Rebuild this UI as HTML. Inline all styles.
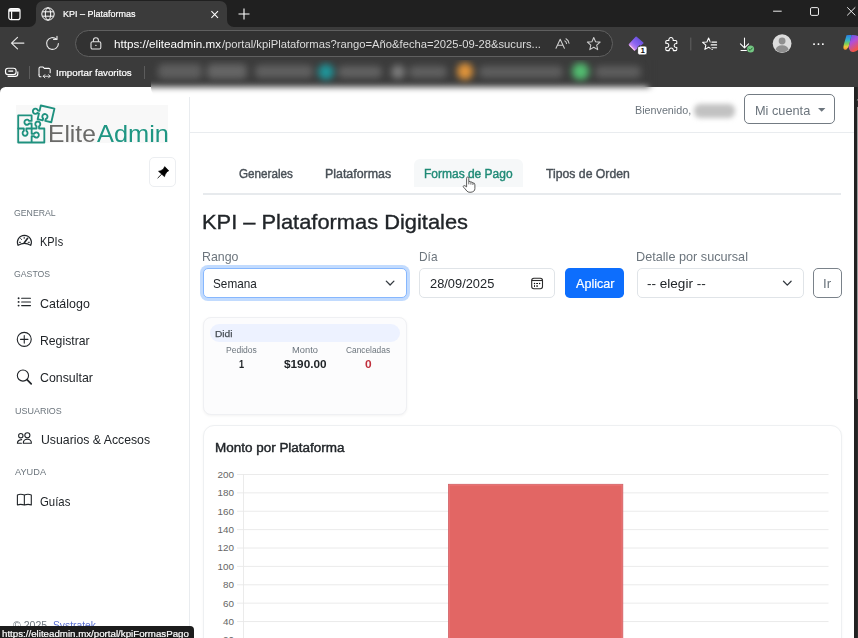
<!DOCTYPE html>
<html lang="es"><head><meta charset="utf-8"><title>KPI – Plataformas</title>
<style>
*{box-sizing:border-box;margin:0;padding:0}
html,body{width:858px;height:638px;overflow:hidden;background:#202020;font-family:"Liberation Sans",sans-serif}
#root{position:relative;width:858px;height:638px;overflow:hidden}
.a{position:absolute}
.t{position:absolute;white-space:pre;line-height:1;transform-origin:0 0;font-family:"Liberation Sans",sans-serif}
svg{position:absolute;overflow:visible}
</style></head><body><div id="root">
<!-- ===== browser chrome ===== -->
<div class="a" style="left:0;top:0;width:858px;height:28px;background:#202020"></div>
<div class="a" style="left:0;top:27.3px;width:858px;height:70px;background:#3b3b3b"></div>
<!-- active tab -->
<div class="a" style="left:36px;top:1px;width:191px;height:27px;background:#3b3b3b;border-radius:7px 7px 0 0"></div>
<svg style="left:29px;top:20px" width="7" height="7"><path d="M7 0V7H0A7 7 0 0 0 7 0Z" fill="#3b3b3b"/></svg>
<svg style="left:227px;top:20px" width="7" height="7"><path d="M0 0V7H7A7 7 0 0 1 0 0Z" fill="#3b3b3b"/></svg>
<!-- tab actions icon -->
<svg style="left:8px;top:8px" width="13" height="13" viewBox="0 0 13 13" fill="none" stroke="#fff" stroke-width="1.2"><rect x="0.8" y="0.6" width="11.2" height="11" rx="2.2"/><path d="M1 2.4H11.8" stroke-width="2.6"/><path d="M3.6 3.3V11.6"/></svg>
<!-- globe -->
<svg style="left:41px;top:7px" width="14" height="14" viewBox="0 0 14 14" fill="none" stroke="#fff" stroke-width="1"><circle cx="7" cy="7" r="6.2"/><ellipse cx="7" cy="7" rx="2.7" ry="6.2"/><path d="M1.3 4.8H12.7M1.3 9.2H12.7"/></svg>
<!-- tab close -->
<svg style="left:0;top:0" width="230" height="27" stroke="#fff" stroke-width="1.05"><path d="M211.4 11.2L218 17.8M218 11.2L211.4 17.8"/></svg>
<!-- new tab -->
<svg style="left:238px;top:8px" width="12" height="12" viewBox="0 0 12 12" stroke="#fff" stroke-width="1.1"><path d="M6 0.5V11.5M0.5 6H11.5"/></svg>
<!-- window controls -->
<svg style="left:0;top:0" width="858" height="27" fill="none" stroke="#ececec" stroke-width="1"><path d="M773.1 11.2H781.7"/><rect x="810.5" y="7.6" width="8" height="7.8" rx="1.3"/><path d="M847.2 7.3L855.3 15.4M855.3 7.3L847.2 15.4"/></svg>
<!-- back -->
<svg style="left:0;top:0" width="70" height="60" fill="none" stroke="#e6e6e6" stroke-width="1.15" stroke-linecap="round" stroke-linejoin="round"><path d="M23.9 43.1H11.7M17.5 37.3L11.5 43.1L17.5 48.9"/></svg>
<!-- refresh -->
<svg style="left:45px;top:36.1px" width="15" height="15" viewBox="0 0 15 15" fill="none" stroke="#e6e6e6" stroke-width="1.15" stroke-linecap="round" stroke-linejoin="round"><path d="M13.4 7.5A5.9 5.9 0 1 1 11.3 3"/><path d="M8.6 3.4H12V0.3"/></svg>
<!-- address pill -->
<div class="a" style="left:74.7px;top:30.2px;width:538.8px;height:26.4px;border-radius:14px;background:#323232;border:1px solid #606060"></div>
<!-- lock -->
<svg style="left:90px;top:37px" width="12" height="13" viewBox="0 0 12 13" fill="none" stroke="#e4e4e4" stroke-width="1.1"><rect x="1" y="4.8" width="9.8" height="7.2" rx="1.4"/><path d="M3.4 4.8V3.2A2.5 2.5 0 0 1 8.4 3.2V4.8"/><circle cx="5.9" cy="8.4" r="0.7" fill="#e4e4e4" stroke="none"/></svg>
<!-- toolbar right icons -->
<svg style="left:0;top:0" width="858" height="62" fill="none" stroke="#fff" stroke-width="1.05" stroke-linecap="round" stroke-linejoin="round">
<defs>
<linearGradient id="g1" x1="0" y1="1" x2="1" y2="0"><stop offset="0" stop-color="#f3a6e6"/><stop offset="0.45" stop-color="#8d66f2"/><stop offset="1" stop-color="#5a48d8"/></linearGradient>
<linearGradient id="g2" x1="0" y1="0" x2="0" y2="1"><stop offset="0" stop-color="#2b7fe6"/><stop offset="0.35" stop-color="#35b3c8"/><stop offset="0.6" stop-color="#7ccf55"/><stop offset="0.8" stop-color="#f4c63a"/><stop offset="1" stop-color="#f08a34"/></linearGradient>
<linearGradient id="g3" x1="0" y1="0" x2="0.4" y2="1"><stop offset="0" stop-color="#4a62e8"/><stop offset="0.5" stop-color="#b24fd8"/><stop offset="1" stop-color="#f0564a"/></linearGradient>
<clipPath id="cf"><path d="M700 36H712.6V40.6H710.6V49H713V52H700Z"/></clipPath>
</defs>
<g stroke="#cfcfcf"><path d="M556 48.3L560.2 39.3L564.4 48.3M557.5 45.3H562.9"/><path d="M564.8 40.9A3.2 3.2 0 0 1 566.5 43.6M566 38.8A5.8 5.8 0 0 1 569 43.2"/><path d="M593.75 37.50L595.57 41.69L600.12 42.13L596.70 45.16L597.69 49.62L593.75 47.30L589.81 49.62L590.80 45.16L587.38 42.13L591.93 41.69Z"/></g>
<path d="M636.2 37.4L642.8 43L634.6 50L629.5 44.6Z" fill="url(#g1)" stroke="url(#g1)" stroke-width="1.6"/>
<path d="M630 45.6L634.4 49.9" stroke="#f7c4ee" stroke-width="1.3"/>
<rect x="637.6" y="46" width="9.4" height="8.9" rx="2" fill="#fff" stroke="#303030" stroke-width="0.8"/>
<path d="M668.9 40.4A2.2 2.2 0 1 1 673.1 40.4H675.6Q676.8 40.4 676.8 41.6V43.6A2 2 0 1 0 676.8 47.4V49.4Q676.8 50.6 675.6 50.6H673.3A2.1 2.1 0 1 0 669.2 50.6H667Q665.8 50.6 665.8 49.4V47.2A2.1 2.1 0 1 0 665.8 43.4V41.6Q665.8 40.4 667 40.4Z"/>
<path d="M690.8 38V50" stroke="#666" stroke-width="0.9"/>
<g clip-path="url(#cf)"><path d="M708.60 38.00L710.30 41.95L714.59 42.35L711.36 45.20L712.30 49.40L708.60 47.20L704.90 49.40L705.84 45.20L702.61 42.35L706.90 41.95Z"/></g>
<path d="M711.9 42.1H716.6M711.2 44.9H716.6M711.9 47.7H716.6" stroke-width="1.1"/>
<path d="M744.5 38V47.6M740.4 43.8L744.5 47.9L748.6 43.8M741 50.5H746.4"/>
<circle cx="750.6" cy="49.1" r="3.5" fill="#74c783" stroke="none"/>
<path d="M748.9 49.2L750.1 50.4L752.3 48" stroke="#1d5c2b" stroke-width="0.95"/>
<circle cx="782.1" cy="43.6" r="9.4" fill="#dcdcdc" stroke="none"/>
<circle cx="782.1" cy="41" r="3.4" fill="#8f8f8f" stroke="none"/>
<path d="M775.6 49.8A6.6 5.6 0 0 1 788.6 49.8A9.2 9.2 0 0 1 775.6 49.8Z" fill="#8f8f8f" stroke="none"/>
<g fill="#fff" stroke="none"><rect x="813.2" y="43.2" width="1.7" height="1.7" rx="0.5"/><rect x="817.6" y="43.2" width="1.7" height="1.7" rx="0.5"/><rect x="822" y="43.2" width="1.7" height="1.7" rx="0.5"/></g>
<path d="M846.5 35.2Q848 34.8 851.5 35L849.5 44Q848.8 48 846.5 49.6Q844.2 50.4 843.4 48.2Q843.3 46.5 844 44Z" fill="url(#g2)" stroke="none"/>
<path d="M851.5 35Q855 34.6 858 36V50Q856 51.5 853.5 52Q850.5 52.3 849.6 50L848.6 47.5Z" fill="url(#g3)" stroke="none"/>
</svg>
<span class="t" style="left:640.4px;top:46.6px;font-size:8px;font-weight:700;color:#111">1</span>
<!-- bookmarks row -->
<svg style="left:0;top:0" width="60" height="90" fill="none" stroke="#fff" stroke-width="1.15"><rect x="5.5" y="68.2" width="10.6" height="6.4" rx="2.6"/><path d="M7.6 76.3H15.2A2.6 2.6 0 0 0 17.8 73.7V71.6"/><path d="M8.3 71.1H13.2" stroke-width="1.3"/></svg>
<div class="a" style="left:29px;top:66px;width:1px;height:13px;background:#5c5c5c"></div>
<svg style="left:38px;top:65.8px" width="14.3" height="12.8" viewBox="0 0 15 14" fill="none" stroke="#fff" stroke-width="1.1" stroke-linejoin="round" stroke-linecap="round"><path d="M0.8 9.5V2.4A1.4 1.4 0 0 1 2.2 1H5L6.6 2.6H11.6A1.4 1.4 0 0 1 13 4V7.5"/><path d="M0.8 9.5V10.4A1.4 1.4 0 0 0 2.2 11.8H3"/><path d="M5.5 11.2H12.8M11.2 9.4L13 11.2L11.2 13M7.2 9.4L5.4 11.2L7.2 13" stroke-width="0.9"/></svg>
<div class="a" style="left:144px;top:66px;width:1px;height:13px;background:#5c5c5c"></div>
<!-- ===== page ===== -->
<div class="a" id="page" style="left:0;top:87px;width:854.2px;height:551px;background:#fff;border-top-left-radius:5.5px;overflow:hidden"></div>
<!-- scrollbar -->
<div class="a" style="left:854.2px;top:87px;width:3.8px;height:551px;background:#222"></div>
<div class="a" style="left:856.5px;top:87px;width:1.5px;height:551px;background:#2c2c2c"></div><div class="a" style="left:856.7px;top:106.5px;width:1.3px;height:292.5px;background:#9a9a9a"></div><svg style="left:855.5px;top:95.5px" width="3" height="5"><path d="M3 0.5V4.5H0.6Z" fill="#8a8a8a"/></svg>
<div class="a" style="left:189px;top:87px;width:1px;height:551px;background:#e9ecef"></div>
<!-- blurred bookmarks -->
<div class="a" style="left:151px;top:60px;width:520px;height:37px;overflow:hidden;border-radius:0 0 0 9px">
  <div class="a" style="left:-20px;top:-20px;width:560px;height:82px;filter:blur(3.3px)">
    <div class="a" style="left:0;top:0;width:519px;height:47px;background:#3b3b3b"></div>
    <div class="a" style="left:0;top:47px;width:517px;height:40px;background:#fff;border-radius:0 0 8px 0"></div>
  </div>
  <div class="a" style="left:-20px;top:-20px;width:560px;height:82px;filter:blur(3.6px)">
    <div class="a" style="left:27px;top:24px;width:44px;height:15px;background:#5e5e5e;border-radius:5px"></div>
    <div class="a" style="left:76px;top:24px;width:40px;height:15px;background:#656565;border-radius:5px"></div>
    <div class="a" style="left:124px;top:25px;width:58px;height:13px;background:#606060;border-radius:5px"></div>
    <div class="a" style="left:187px;top:24px;width:16px;height:16px;border-radius:8px;background:#1f959a"></div>
    <div class="a" style="left:207px;top:26px;width:44px;height:12px;background:#626262;border-radius:5px"></div>
    <div class="a" style="left:260px;top:25px;width:14px;height:14px;border-radius:7px;background:#7c7c7c"></div>
    <div class="a" style="left:278px;top:26px;width:38px;height:12px;background:#606060;border-radius:5px"></div>
    <div class="a" style="left:326px;top:23px;width:16px;height:17px;border-radius:8px;background:#e0943a"></div>
    <div class="a" style="left:348px;top:26px;width:84px;height:12px;background:#5e5e5e;border-radius:5px"></div>
    <div class="a" style="left:441px;top:23px;width:17px;height:17px;border-radius:8px;background:#52bd70"></div>
    <div class="a" style="left:464px;top:26px;width:46px;height:12px;background:#5e5e5e;border-radius:5px"></div>
  </div>
</div>
<!-- sidebar -->
<div class="a" style="left:16px;top:105px;width:152px;height:38px;background:#f8f8f8"></div>
<svg style="left:0;top:0" width="200" height="200" fill="none" stroke="#1f917f" stroke-width="1.9" stroke-linejoin="round" stroke-linecap="round">
<g transform="translate(44.33,0) scale(0.965,1) translate(-44.33,0)"><path d="M31.17 128.57V123.5H28.55A2.6 2.6 0 1 1 28.55 120.9H31.17V115.41H17.26V128.57H23.1V130.85A2.6 2.6 0 1 0 25.7 130.85V128.57H31.17"/>
<path d="M17.26 128.57V142.48H44.33V128.57H38.86V126.3A2.6 2.6 0 1 0 36.26 126.3V128.57H31.17V133.7H33.8A2.6 2.6 0 1 1 33.8 136.3H31.17V142.48"/>
</g>
<g transform="translate(40.8,105.5) rotate(13)"><path d="M0 0H14V14H7.8V12.15A2.6 2.6 0 1 0 5.2 12.15V14H0V8.1H-1.65A2.6 2.6 0 1 1 -1.65 5.5H0Z"/></g>
</svg>
<div class="a" style="left:149.3px;top:157px;width:27.2px;height:29.5px;border:1px solid #eceef1;border-radius:5px;background:#fff"></div>
<svg style="left:0;top:0" width="200" height="200"><path d="M164.7 166.6L168.8 170.7L166.9 171.9L165.2 174.6L164.5 176.7L158.5 171.3L160.6 170.7L163.2 169.2Z" fill="#000" stroke="#000" stroke-width="0.6" stroke-linejoin="round"/><path d="M161.6 174.2L157.9 177.9" stroke="#222" stroke-width="1" stroke-linecap="round"/></svg>
<svg style="left:0;top:0" width="200" height="638" fill="none" stroke="#212529" stroke-width="1.1" stroke-linecap="round" stroke-linejoin="round">
<path d="M18.1 245.4A7 7 0 1 1 30.7 245.4Q24.4 241.4 18.1 245.4Z"/>
<path d="M24.3 242.8L27.6 238.3" stroke-width="1.6"/>
<path d="M24.2 237.2V238.4M20.7 238.6L21.5 239.5M19.3 242.3H20.5M28.2 242.3H29.4" stroke-width="1"/>
<g stroke-width="1.05"><path d="M21.6 298.3H30.5M21.6 301.9H30.5M21.6 305.6H30.5"/></g>
<g fill="#212529" stroke="none"><circle cx="18.6" cy="298.3" r="0.95"/><circle cx="18.6" cy="301.9" r="0.95"/><circle cx="18.6" cy="305.6" r="0.95"/></g>
<circle cx="24.25" cy="339.35" r="7"/><path d="M20.5 339.35H28M24.25 335.6V343.1"/>
<circle cx="22.95" cy="375.55" r="5.6"/><path d="M27 379.6L31.2 383.8" stroke-width="1.7"/>
<circle cx="27.35" cy="435.3" r="2.55"/><path d="M23.3 443.3H31.4Q31.4 439.3 27.35 439.3Q23.3 439.3 23.3 443.3Z"/>
<circle cx="20.8" cy="435.7" r="2.2"/><path d="M21.4 443.3H17.4Q17.4 440 21.7 439.6"/>
<path d="M17.4 494.9Q20.8 493.6 24.35 495Q27.9 493.6 31.3 494.9V504.9Q27.9 503.7 24.35 505.1Q20.8 503.7 17.4 504.9ZM24.35 495V505"/>
</svg>
<!-- header -->
<div class="a" style="left:190px;top:132px;width:664px;height:1px;background:#e9ecef"></div>
<div class="a" style="left:693.5px;top:103.5px;width:41px;height:14px;background:#c2c2c2;border-radius:6px;filter:blur(2.5px)"></div>
<div class="a" style="left:744.3px;top:94.2px;width:90.8px;height:30.2px;border:1px solid #737b83;border-radius:5px;background:#fff"></div>
<svg style="left:818px;top:107.6px" width="8" height="4"><path d="M0 0H7.4L3.7 3.7Z" fill="#6c757d"/></svg>
<!-- tabs -->
<div class="a" style="left:413.8px;top:158.5px;width:109.2px;height:28.3px;background:#f6f8f9;border-radius:6px 6px 0 0"></div>
<div class="a" style="left:202.8px;top:193.3px;width:638.7px;height:1.6px;background:#e7eaed"></div>
<!-- filters -->
<div class="a" style="left:202.8px;top:268px;width:204.6px;height:30.2px;border:1px solid #86b7fe;border-radius:5px;background:#fff;box-shadow:0 0 0 3px rgba(13,110,253,.25)"></div>
<svg style="left:0;top:0" width="858" height="300" fill="none" stroke="#343a40" stroke-width="1.3" stroke-linecap="round" stroke-linejoin="round"><path d="M386.3 281.1L390.1 285L393.9 281.1"/></svg>
<div class="a" style="left:419.2px;top:268px;width:136.3px;height:30.2px;border:1px solid #e0e4e8;border-radius:5px;background:#fff"></div>
<svg style="left:0;top:0" width="858" height="300" fill="none" stroke="#2a2a2a" stroke-width="1.1"><rect x="531.7" y="278.2" width="10.8" height="10.5" rx="2.2"/><path d="M531.7 280.5H542.5"/><g fill="#111" stroke="none"><circle cx="534.5" cy="283.5" r="0.75"/><rect x="536.2" y="283" width="1.8" height="1"/><circle cx="539.6" cy="283.5" r="0.75"/><rect x="534" y="285.2" width="1" height="1.7"/><rect x="536.2" y="285.2" width="1.8" height="1.7" fill="#555"/></g></svg>
<div class="a" style="left:565px;top:268.1px;width:59.4px;height:30.1px;border-radius:4.8px;background:#0d6efd"></div>
<div class="a" style="left:637.2px;top:268px;width:166.4px;height:30.2px;border:1px solid #e0e4e8;border-radius:5px;background:#fff"></div>
<svg style="left:0;top:0" width="858" height="300" fill="none" stroke="#343a40" stroke-width="1.3" stroke-linecap="round" stroke-linejoin="round"><path d="M783.5 281.3L787.3 285.1L791.1 281.3"/></svg>
<div class="a" style="left:813.2px;top:268.2px;width:28.8px;height:30px;border:1px solid #7a828a;border-radius:5px;background:#fff"></div>
<!-- Didi card -->
<div class="a" style="left:202.5px;top:317.3px;width:204.5px;height:98px;border:1px solid #eff0f3;border-radius:8px;background:#fcfcfd;box-shadow:0 1px 3px rgba(0,0,0,.05)"></div>
<div class="a" style="left:209.6px;top:324.2px;width:190.5px;height:17.8px;border-radius:9px;background:#edf2ff"></div>
<!-- chart card -->
<div class="a" style="left:202.5px;top:425px;width:639px;height:240px;border:1px solid #eef0f2;border-radius:11px;background:#fff;box-shadow:0 1px 3px rgba(0,0,0,.04)"></div>
<!--CHART-->
<svg style="left:0;top:0" width="858" height="638" fill="none"><g stroke="#e7e7e7" stroke-width="0.85"><path d="M237 474.50H828.5"/><path d="M237 492.88H828.5"/><path d="M237 511.26H828.5"/><path d="M237 529.64H828.5"/><path d="M237 548.02H828.5"/><path d="M237 566.40H828.5"/><path d="M237 584.78H828.5"/><path d="M237 603.16H828.5"/><path d="M237 621.54H828.5"/><path d="M237 639.92H828.5"/><path d="M243.5 474.2V640"/></g><rect x="448.4" y="484.3" width="174.4" height="160" fill="#e26664" stroke="#cf666b" stroke-width="0.8"/><rect x="449.3" y="485.2" width="172.6" height="160" fill="none" stroke="#ee7577" stroke-width="0.7"/></svg>
<span class="t" style="left:62.60px;top:9.14px;font-size:9.6px;font-weight:400;color:#ffffff;transform:scaleX(0.9365);-webkit-text-stroke:0.2px #fff;">KPI – Plataformas</span>
<span class="t" style="left:114.00px;top:39.08px;font-size:11.2px;font-weight:400;color:#ffffff;transform:scaleX(1.0437);">https://eliteadmin.mx</span>
<span class="t" style="left:221.50px;top:39.08px;font-size:11.2px;font-weight:400;color:#dcdcdc;transform:scaleX(1.0035);">/portal/kpiPlataformas?rango=Año&amp;fecha=2025-09-28&amp;sucurs...</span>
<span class="t" style="left:55.90px;top:67.74px;font-size:9.6px;font-weight:400;color:#ffffff;transform:scaleX(1.0141);-webkit-text-stroke:0.2px #fff;">Importar favoritos</span>
<span class="t" style="left:47.96px;top:122.95px;font-size:23.7px;font-weight:400;color:#6a6a68;transform:scaleX(1.0377);">Elite</span>
<span class="t" style="left:96.70px;top:122.95px;font-size:23.7px;font-weight:400;color:#1f9683;transform:scaleX(1.0717);">Admin</span>
<span class="t" style="left:14.30px;top:208.09px;font-size:9.9px;font-weight:400;color:#6c757d;transform:scaleX(0.8825);">GENERAL</span>
<span class="t" style="left:40.01px;top:236.29px;font-size:12.25px;font-weight:400;color:#212529;transform:scaleX(0.8931);">KPIs</span>
<span class="t" style="left:14.30px;top:269.38px;font-size:9.9px;font-weight:400;color:#6c757d;transform:scaleX(0.8819);">GASTOS</span>
<span class="t" style="left:40.40px;top:298.39px;font-size:12.25px;font-weight:400;color:#212529;transform:scaleX(1.0158);">Catálogo</span>
<span class="t" style="left:39.50px;top:335.49px;font-size:12.25px;font-weight:400;color:#212529;transform:scaleX(0.9976);">Registrar</span>
<span class="t" style="left:40.40px;top:371.99px;font-size:12.25px;font-weight:400;color:#212529;transform:scaleX(1.0086);">Consultar</span>
<span class="t" style="left:14.50px;top:406.19px;font-size:9.9px;font-weight:400;color:#6c757d;transform:scaleX(0.9078);">USUARIOS</span>
<span class="t" style="left:40.60px;top:433.79px;font-size:12.25px;font-weight:400;color:#212529;transform:scaleX(1.0011);">Usuarios &amp; Accesos</span>
<span class="t" style="left:14.50px;top:466.58px;font-size:9.9px;font-weight:400;color:#6c757d;transform:scaleX(0.9317);">AYUDA</span>
<span class="t" style="left:40.30px;top:496.39px;font-size:12.25px;font-weight:400;color:#212529;transform:scaleX(0.9276);">Guías</span>
<span class="t" style="left:13.40px;top:620.60px;font-size:10px;font-weight:400;color:#6c757d;transform:scaleX(1.0539);">© 2025</span>
<span class="t" style="left:52.60px;top:620.60px;font-size:10px;font-weight:400;color:#5a6fd0;transform:scaleX(1.0286);">Systratek</span>
<span class="t" style="left:634.80px;top:104.70px;font-size:10.7px;font-weight:400;color:#6c757d;transform:scaleX(1.0056);">Bienvenido,</span>
<span class="t" style="left:754.56px;top:105.19px;font-size:12.25px;font-weight:400;color:#6c757d;transform:scaleX(1.0402);">Mi cuenta</span>
<span class="t" style="left:238.50px;top:168.24px;font-size:12.3px;font-weight:400;color:#495057;transform:scaleX(0.9508);-webkit-text-stroke:0.4px currentColor;">Generales</span>
<span class="t" style="left:324.99px;top:168.24px;font-size:12.3px;font-weight:400;color:#495057;transform:scaleX(1.0084);-webkit-text-stroke:0.4px currentColor;">Plataformas</span>
<span class="t" style="left:423.63px;top:168.24px;font-size:12.3px;font-weight:400;color:#1f8a76;transform:scaleX(0.9748);-webkit-text-stroke:0.4px currentColor;">Formas de Pago</span>
<span class="t" style="left:546.00px;top:168.24px;font-size:12.3px;font-weight:400;color:#495057;transform:scaleX(0.9945);-webkit-text-stroke:0.4px currentColor;">Tipos de Orden</span>
<span class="t" style="left:202.45px;top:211.62px;font-size:20.8px;font-weight:400;color:#212529;transform:scaleX(1.0507);-webkit-text-stroke:0.35px #212529;">KPI – Plataformas Digitales</span>
<span class="t" style="left:202.39px;top:251.19px;font-size:12.25px;font-weight:400;color:#6c757d;transform:scaleX(1.0089);">Rango</span>
<span class="t" style="left:419.33px;top:251.19px;font-size:12.25px;font-weight:400;color:#6c757d;transform:scaleX(0.9699);">Día</span>
<span class="t" style="left:636.27px;top:251.19px;font-size:12.25px;font-weight:400;color:#6c757d;transform:scaleX(1.0344);">Detalle por sucursal</span>
<span class="t" style="left:213.00px;top:277.59px;font-size:12.25px;font-weight:400;color:#212529;transform:scaleX(0.9604);">Semana</span>
<span class="t" style="left:430.00px;top:277.59px;font-size:12.25px;font-weight:400;color:#212529;transform:scaleX(1.0488);">28/09/2025</span>
<span class="t" style="left:575.60px;top:277.89px;font-size:12.25px;font-weight:400;color:#ffffff;transform:scaleX(1.0277);-webkit-text-stroke:0.2px #fff;">Aplicar</span>
<span class="t" style="left:647.40px;top:277.59px;font-size:12.25px;font-weight:400;color:#212529;transform:scaleX(1.1055);">-- elegir --</span>
<span class="t" style="left:822.91px;top:277.59px;font-size:12.25px;font-weight:400;color:#6c757d;transform:scaleX(1.0932);">Ir</span>
<span class="t" style="left:214.80px;top:329.88px;font-size:9.2px;font-weight:400;color:#495057;transform:scaleX(1.1086);-webkit-text-stroke:0.25px currentColor;">Didi</span>
<span class="t" style="left:226.20px;top:346.38px;font-size:8.5px;font-weight:400;color:#6c757d;transform:scaleX(1.0044);">Pedidos</span>
<span class="t" style="left:291.70px;top:346.38px;font-size:8.5px;font-weight:400;color:#6c757d;transform:scaleX(1.0964);">Monto</span>
<span class="t" style="left:346.40px;top:346.38px;font-size:8.5px;font-weight:400;color:#6c757d;transform:scaleX(0.9812);">Canceladas</span>
<span class="t" style="left:238.60px;top:358.85px;font-size:11px;font-weight:700;color:#212529;transform:scaleX(0.8333);">1</span>
<span class="t" style="left:283.80px;top:358.85px;font-size:11px;font-weight:700;color:#212529;transform:scaleX(1.0695);">$190.00</span>
<span class="t" style="left:365.00px;top:358.85px;font-size:11px;font-weight:700;color:#c0303d;transform:scaleX(1.0833);">0</span>
<span class="t" style="left:215.30px;top:442.25px;font-size:12.3px;font-weight:400;color:#212529;transform:scaleX(1.0954);-webkit-text-stroke:0.4px currentColor;">Monto por Plataforma</span>
<span class="t" style="left:217.52px;top:470.48px;font-size:9.9px;font-weight:400;color:#666666;transform:scaleX(1.0000);">200</span>
<span class="t" style="left:217.52px;top:487.86px;font-size:9.9px;font-weight:400;color:#666666;transform:scaleX(1.0000);">180</span>
<span class="t" style="left:217.52px;top:507.24px;font-size:9.9px;font-weight:400;color:#666666;transform:scaleX(1.0000);">160</span>
<span class="t" style="left:217.52px;top:524.62px;font-size:9.9px;font-weight:400;color:#666666;transform:scaleX(1.0000);">140</span>
<span class="t" style="left:217.52px;top:543.00px;font-size:9.9px;font-weight:400;color:#666666;transform:scaleX(1.0000);">120</span>
<span class="t" style="left:217.52px;top:562.38px;font-size:9.9px;font-weight:400;color:#666666;transform:scaleX(1.0000);">100</span>
<span class="t" style="left:223.01px;top:579.76px;font-size:9.9px;font-weight:400;color:#666666;transform:scaleX(1.0000);">80</span>
<span class="t" style="left:223.01px;top:599.14px;font-size:9.9px;font-weight:400;color:#666666;transform:scaleX(1.0000);">60</span>
<span class="t" style="left:223.01px;top:616.52px;font-size:9.9px;font-weight:400;color:#666666;transform:scaleX(1.0000);">40</span>
<span class="t" style="left:223.01px;top:634.90px;font-size:9.9px;font-weight:400;color:#666666;transform:scaleX(1.0000);">20</span>
<span class="t" style="left:2.00px;top:629.14px;font-size:9.6px;font-weight:400;color:#ffffff;transform:scaleX(1.0127);z-index:6;-webkit-text-stroke:0.2px #fff;">https://eliteadmin.mx/portal/kpiFormasPago</span>
<!-- hand cursor -->
<svg style="left:0;top:0;z-index:4" width="858" height="300"><path d="M466.6 178.2Q466.6 177 467.7 177Q468.8 177 468.8 178.2V181.7Q470 180.9 470.9 182.1Q472.1 181.6 472.9 182.9Q474.8 182.7 474.9 184.8V188.5Q474.9 190.2 473.8 191.2Q472.5 192.3 470 192.3Q467.8 192.3 466.8 191Q465.2 188.8 463.5 187.2Q462.9 186.4 463.6 185.8Q464.6 185 466.6 186.9Z" fill="#fff" stroke="#4a4a4a" stroke-width="0.9" stroke-linejoin="round"/><path d="M468.8 181.7V184.4M470.9 182.3V184.6M472.9 183.1V185" stroke="#4a4a4a" stroke-width="0.8"/></svg>
<!-- status bubble -->
<div class="a" style="left:0;top:625.6px;width:194px;height:13px;background:#1c1c1c;border-top-right-radius:4px;z-index:5"></div>
<!--STATUSTEXT-->
</div></body></html>
